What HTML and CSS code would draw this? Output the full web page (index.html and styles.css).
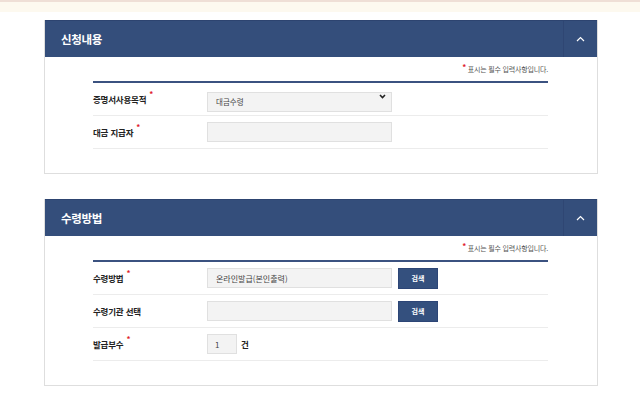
FILE: index.html
```html
<!DOCTYPE html>
<html lang="ko">
<head>
    <meta charset="UTF-8">
    <title>신청내용</title>
    <link rel="stylesheet" href="styles.css">
</head>
<body>
    <div class="topbar"></div>
    <div class="content">
        <div class="panel">
            <div class="panel-head">
                <h3>신청내용</h3>
                <button class="toggle" type="button">
                    <svg width="9" height="6" viewBox="0 0 9 6"><polyline points="1,5 4.5,1.5 8,5" fill="none" stroke="#fff" stroke-width="1.2"/></svg>
                </button>
            </div>
            <div class="panel-body">
                <p class="note"><span class="req">*</span> 표시는 필수 입력사항입니다.</p>
                <div class="form-table">
                    <div class="row">
                        <div class="label">증명서사용목적<span class="req">*</span></div>
                        <div class="field">
                            <div class="select-wrap">
                                <select class="input">
                                    <option>대금수령</option>
                                </select>
                                <svg class="arrow" width="7" height="5" viewBox="0 0 7 5"><polyline points="1,1 3.5,3.5 6,1" fill="none" stroke="#222" stroke-width="1.6"/></svg>
                            </div>
                        </div>
                    </div>
                    <div class="row">
                        <div class="label">대금 지급자<span class="req">*</span></div>
                        <div class="field">
                            <input class="input" type="text">
                        </div>
                    </div>
                </div>
            </div>
        </div>

        <div class="panel">
            <div class="panel-head">
                <h3>수령방법</h3>
                <button class="toggle" type="button">
                    <svg width="9" height="6" viewBox="0 0 9 6"><polyline points="1,5 4.5,1.5 8,5" fill="none" stroke="#fff" stroke-width="1.2"/></svg>
                </button>
            </div>
            <div class="panel-body">
                <p class="note"><span class="req">*</span> 표시는 필수 입력사항입니다.</p>
                <div class="form-table">
                    <div class="row">
                        <div class="label">수령방법<span class="req">*</span></div>
                        <div class="field">
                            <input class="input" type="text" value="온라인발급(본인출력)">
                            <button class="btn" type="button">검색</button>
                        </div>
                    </div>
                    <div class="row">
                        <div class="label">수령기관 선택</div>
                        <div class="field">
                            <input class="input" type="text">
                            <button class="btn" type="button">검색</button>
                        </div>
                    </div>
                    <div class="row">
                        <div class="label">발급부수<span class="req">*</span></div>
                        <div class="field">
                            <input class="input count" type="text" value="1">
                            <span class="unit">건</span>
                        </div>
                    </div>
                </div>
            </div>
        </div>
    </div>
</body>
</html>
```

FILE: styles.css
```css
body { margin: 0; font-family: "Noto Sans CJK KR", "Noto Sans", sans-serif; background: #fff; color: #333; }
.topbar { height: 10px; border-top: 2px solid #efdfd6; background: #fdf9ef; }
.content { padding: 8px 42px 0 44px; }
.panel { border: 1px solid #dedede; border-top: none; margin-bottom: 25px; }
.panel-head { display: flex; align-items: center; justify-content: space-between; height: 36px; background: #344e7b; border-top: 1px solid #2d4470; }
.panel-head h3 { margin: 0 0 0 16px; font-size: 11.5px; font-weight: bold; color: #fff; letter-spacing: -0.3px; }
.toggle { display: flex; align-items: center; justify-content: center; width: 34px; height: 36px; padding: 0; border: none; border-left: 1px solid #2f4673; background: transparent; }
.panel-body { padding: 6px 49px 24px 48px; }
.note { margin: 0 0 6px; text-align: right; font-size: 7px; line-height: 12px; color: #555; letter-spacing: -0.2px; }
.note .req { position: relative; top: -2px; font-size: 8px; }
.req { color: #e0202a; font-weight: bold; }
.form-table { border-top: 2px solid #3b5280; }
.row { display: flex; align-items: center; height: 32px; border-bottom: 1px solid #ececec; }
.label { width: 114px; font-size: 8.5px; font-weight: bold; color: #222; letter-spacing: -0.2px; }
.label .req { position: relative; top: -6px; margin-left: 3px; font-size: 8px; }
.field { display: flex; align-items: center; gap: 6px; }
.input { box-sizing: border-box; width: 185px; height: 20px; margin: 0; padding: 0 8px; border: 1px solid #e0e0e0; background: #f3f3f3; font-family: inherit; font-size: 8px; color: #444; outline: none; }
.select-wrap { position: relative; }
select.input { appearance: none; -webkit-appearance: none; font-size: 7.5px; }
.select-wrap .arrow { position: absolute; right: 6px; top: 8px; }
.btn { width: 40px; height: 21px; padding: 0; border: 1px solid #2c4576; background: #34507e; color: #fff; font-family: inherit; font-size: 7px; font-weight: bold; }
.count { width: 30px; padding: 0 7px; }
.unit { margin-left: -2px; font-size: 8.5px; font-weight: bold; color: #222; }
```
